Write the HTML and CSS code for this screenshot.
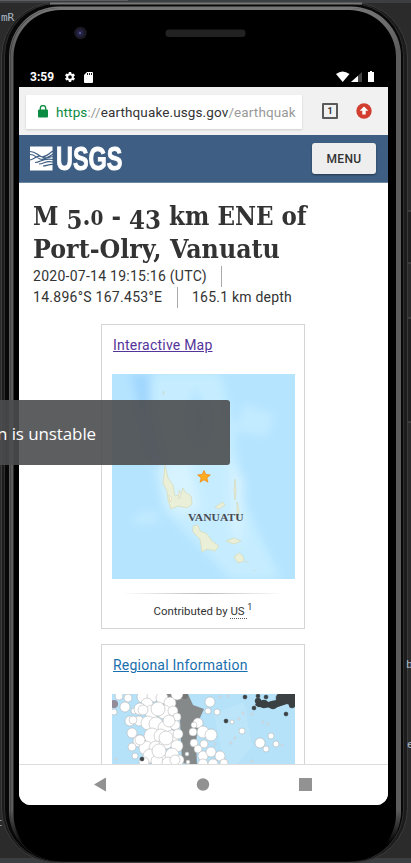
FILE: index.html
```html
<!DOCTYPE html>
<html lang="en">
<head>
<meta charset="utf-8">
<title>USGS Earthquake</title>
<link rel="stylesheet" href="styles.css">
</head>
<body>
<svg class="device" width="411" height="863" viewBox="0 0 411 863" aria-hidden="true">
  <defs>
    <linearGradient id="fade" x1="0" x2="0" y1="0" y2="1"><stop offset="0" stop-color="#777"/><stop offset=".05" stop-color="#5c5c5c"/><stop offset=".94" stop-color="#5c5c5c"/><stop offset=".98" stop-color="#000"/></linearGradient>
  </defs>
  <rect width="411" height="863" fill="#2b2b2b"/>
  <rect width="411" height="3" fill="#3c3f41"/>
  <rect x="0" y="0" width="128" height="1" fill="#5b5d5f"/>
  <rect y="858" width="411" height="5" fill="#3c3f41"/>
  <path d="M407.500 211h4v52h-4zM407.500 318h4v104h-4z" fill="#202020" stroke="#555" stroke-width="1"/>
  <rect x="1.500" y="2.500" width="406" height="860" rx="54" fill="#1c1c1c" stroke="#3c3c3c"/>
  <rect x="4.500" y="3.500" width="399" height="858" rx="52" fill="#080808" stroke="#303030"/>
  <path d="M50 3.500H362" stroke="#777" stroke-width="2"/>
  <rect x="9" y="6.500" width="392" height="855" rx="50" fill="url(#fade)"/>
  <rect x="10" y="8" width="390" height="853" rx="49" fill="#303030"/>
  <rect x="10.500" y="8" width="390" height="853" rx="49" fill="url(#fade)"/>
  <rect x="13.500" y="10" width="382.500" height="851" rx="47" fill="#000"/>
  <path d="M60 857H350" stroke="#000" stroke-width="9"/>
  <rect x="165.500" y="29.500" width="80" height="7.500" rx="3.500" fill="#222"/>
  <circle cx="80.500" cy="33" r="6.200" fill="#1b1a24"/><circle cx="80" cy="33" r="3.500" fill="#25234a"/><circle cx="80" cy="33" r="1" fill="#686993"/>
</svg>
<span class="code c1">mR</span><span class="code c2">t</span><span class="code c3">b</span><span class="code c4">e</span>
<main class="phone">
  <div class="status">
    <span class="time">3:59</span>
    <svg class="gear" width="12" height="12" viewBox="0 0 24 24"><path fill="#fff" fill-rule="evenodd" d="M19.400 13a7.500 7.500 0 0 0 0-2l2.500-2-2.400-4.100-2.900 1.200-1.800-1L14.300 2H9.700l-.5 3.100-1.800 1-2.900-1.200L2.100 9l2.500 2v2l-2.500 2 2.400 4.100 2.900-1.200 1.800 1 .5 3.100h4.600l.5-3.100 1.800-1 2.900 1.200 2.400-4.100zM12 15.700a3.700 3.700 0 1 1 0-7.400 3.700 3.700 0 0 1 0 7.400z"/></svg>
    <svg class="sd" width="9" height="11" viewBox="0 0 9 11"><path fill="#fff" d="M3 0h5a1 1 0 0 1 1 1v9a1 1 0 0 1-1 1H1a1 1 0 0 1-1-1V3z"/><path stroke="#222" d="M3.500 1v2M5.500 1v2M7.500 1v2"/></svg>
    <svg class="signals" width="40" height="12" viewBox="0 0 40 12"><path fill="#fff" d="M0 3Q6.500-2 13.500 3L6.700 11z"/><path fill="#444" d="M26 1v10H15z"/><path fill="#fff" d="M22 4.700V11h-7z"/><path fill="#fff" d="M34 0h2v1h2v10h-6V1h2z"/></svg>
  </div>
  <div class="screen">
    <div class="browser">
      <div class="url">
        <svg width="10" height="13" viewBox="0 0 10 13"><rect y="4.500" width="10" height="8" rx="1" fill="#0c8b43"/><path d="M2.300 5V3.300a2.700 2.700 0 0 1 5.400 0V5" fill="none" stroke="#0c8b43" stroke-width="1.300"/></svg>
        <span class="address"><span class="secure">https</span><span class="dim">://</span>earthquake.usgs.gov<span class="dim">/earthquak</span></span>
      </div>
      <div class="tabs">1</div>
      <svg width="16" height="16" viewBox="0 0 16 16"><circle cx="8" cy="8" r="7.700" fill="#d23f31"/><path fill="#fff" d="M8 3.500l4.300 4.300H9.700v3.700H6.300V7.800H3.700z"/></svg>
    </div>
    <header class="site">
      <div class="logo">
        <svg width="23" height="25" viewBox="0 0 23 25"><path fill="#fff" d="M0 .5h22.500v24H0z"/><g fill="none" stroke="#3e5e83" stroke-width="1.200"><path d="M0 5.500c6 0 7 3.500 11 5S18 8 23 5M0 8.500c5 0 6 3 10 4.500s8-2 13-5M0 14c5-1 7-5.500 11-3.500s6 1.500 12 0M5 16.500c6 0 7-5 18-3M9 18c5 0 7-4 14-2M13 20c4 0 6-2 10-1.500"/></g></svg>
        <span class="word">USGS</span>
      </div>
      <button class="menu">MENU</button>
    </header>
    <section class="content">
      <h1><span class="l1">M <span class="drop">5</span>.<span class="small">0</span> - <span class="drop">43</span> km ENE of</span><br><span class="l2">Port-Olry, Vanuatu</span></h1>
      <div class="meta"><span class="cell date">2020-07-14 19:15:16 (UTC)</span></div>
      <div class="meta"><span class="cell coord">14.896°S 167.453°E</span><span class="depth">165.1 km depth</span></div>
      <article class="card first">
        <a class="visited">Interactive Map</a>
        <svg class="map" width="183" height="205" viewBox="0 0 183 205">
          <defs><filter id="b"><feGaussianBlur stdDeviation="5"/></filter><filter id="s"><feGaussianBlur stdDeviation=".6"/></filter></defs>
          <rect width="183" height="205" fill="#b5e4ff"/>
          <g filter="url(#b)">
            <path fill="#c6edff" d="M42 0h66l14 55 5 60 22 50 20 40h-50L86 170 52 137 35 60z"/>
            <path fill="#a0d6fd" d="M19 0h18l2 42 11 50-9-4-12-46z"/>
            <path fill="#b0e0ff" d="M82 12l14 32-6 28-12-17z"/>
            <path fill="#c3ebff" d="M133 30l30 11-9 22-32-7zM20 143l22-7 7 12-29 2z"/>
            <path fill="#d7f3ff" d="M49 93l28-6 12 48-22 6-13-13zM118 78l14 30-3 63-9-13z"/>
          </g>
          <g filter="url(#s)" fill="#eaf0d8" stroke="#d5d9b8" stroke-width=".7">
            <path d="M53 91l3 13 5 7 2 11 6-2 2-6 2 4 6 4 1 8-5 4-9-2-7 3-3-9-1-9-4-8z"/>
            <path d="M103 133l8-5 2 3-6 4zM123 105l1 12-1 9-1-10zM125 128l2 8-1 9-1-9z"/>
            <path d="M81 152l5-1 2 6 7 3 5 7 7 5-4 5-8-2-5 3-2-13-7-7zM114 167l8-3 7 3-7 3zM122 183l5-4 4 3 1 5-6 2zM133 187l4 2M141 196l2 1M130 174l1 1"/>
            <path fill="#fff7ed" d="M57 121l3 3-2 4zM67 116l2 5-2 4z"/><path d="M51 17l1 4M53 88l1 2" stroke="#d2c9a5"/>
          </g>
          <path fill="#ffad20" stroke="#f18c16" stroke-width=".8" d="M92 96.500l1.800 4 4.500.4-3.500 3 1.200 4.300-4-2.400-4 2.400 1.200-4.300-3.500-3 4.500-.4z"/>
          <text x="76" y="147" textLength="55.500" lengthAdjust="spacingAndGlyphs" class="label">VANUATU</text>
        </svg>
        <div class="rule"></div>
        <p>Contributed by <span class="us">US </span><sup>1</sup></p>
      </article>
      <article class="card second">
        <a>Regional Information</a>
        <svg class="map" id="regional" width="183" height="100" viewBox="0 0 183 100">
          <rect width="183" height="100" fill="#b5e2f9"/>
          <path d="M102 20l30-12 8 44-25 30z" fill="#c7ebfa" opacity=".4"/>
          <path fill="#85898a" d="M53 0h23l5 11 11 4-5 11-3 22 1 23-15-2-2-43-9-10z"/>
          <circle cx="2" cy="10" r="4" fill="#938b98"/><circle cx="73" cy="2" r="3" fill="#777"/>
          <path fill="#3b4042" d="M145 8l6-2 5 2 8-2 4-6h15v13l-8-3-12 4-17-1-3-2z"/>
          <g id="quakes"></g>
        </svg>
      </article>
    </section>
    <nav>
      <svg width="369" height="40" viewBox="0 0 369 40"><g fill="#929292"><path d="M75 19.500l11-6.500q1-.5 1 .5v12q0 1-1 .5z"/><circle cx="184" cy="19.500" r="6.200"/><rect x="280" y="13" width="13" height="13" rx=".5"/></g></svg>
    </nav>
  </div>
</main>
<div class="toast">n is unstable</div>
<script src="quakes.js"></script>
</body>
</html>
```
FILE: styles.css
```css
* { box-sizing: border-box; }
body { margin: 0; width: 411px; height: 863px; overflow: hidden; position: relative; background: #2b2b2b; color: #333; font-family: Roboto, sans-serif; }
svg { display: block; flex: none; }
.device { position: absolute; inset: 0; }
.code { position: absolute; color: #a9b7c6; font: 11px "DejaVu Sans Mono", monospace; }
.c1 { left: 1px; top: 11px; }
.c2 { left: -4px; top: 816px; }
.c3 { left: 406px; top: 658px; }
.c4 { left: 407px; top: 738px; }
.phone { position: relative; width: 369px; margin-left: 19px; padding-top: 67px; }
.status { height: 20px; display: flex; align-items: center; padding-left: 11px; color: #fff; }
.time { font-size: 12px; font-weight: 700; width: 34px; }
.sd { margin-left: 8px; }
.signals { margin-left: auto; margin-right: 12px; }
.screen { height: 718px; display: flex; flex-direction: column; overflow: hidden; background: #fff; border-radius: 0 0 12px 12px; }
.browser { height: 48px; flex: none; display: flex; align-items: center; background: #f1f1f1; padding-left: 7px; }
.url { width: 276px; height: 34px; margin-top: 1px; display: flex; align-items: center; background: #fff; padding-left: 12px; gap: 8px; box-shadow: 0 1px 2px #ccc; }
.address { font-size: 13.500px; letter-spacing: .12px; white-space: nowrap; }
.secure { color: #0c8b43; }
.dim { color: #999; }
.tabs { width: 16px; height: 16px; border: 2px solid #5a5a5a; border-radius: 1px; margin: 0 18px 0 20px; font: 700 9px/12px Roboto, sans-serif; text-align: center; }
.site { height: 48px; flex: none; background: #3e5e83; border-bottom: 1px solid #6d86a1; display: flex; align-items: center; padding: 0 12px 0 11px; justify-content: space-between; }
.logo { display: flex; align-items: center; gap: 3px; }
.word { color: #fff; font: 700 33px/25px "Liberation Sans", sans-serif; width: 66px; transform: scaleX(.71); transform-origin: left; -webkit-text-stroke: 1px #fff; }
.menu { width: 64px; height: 31px; border: 0; padding: 0; border-radius: 3px; background: #eee; color: #333; box-shadow: 0 1px 2px #26384e; font: 500 12px Roboto, sans-serif; letter-spacing: .4px; }
.content { flex: 1; min-height: 0; overflow: hidden; padding: 17px 14px 0; }
h1 { margin: 0; height: 66px; font: 700 26px/33px "DejaVu Serif", serif; white-space: nowrap; }
.l1, .l2 { display: inline-block; transform-origin: left; height: 33px; vertical-align: top; }
.l1 { transform: scaleX(.885); }
.l2 { transform: scaleX(.915); }
.drop { position: relative; top: 4px; }
.small { font-size: 21px; }
.meta { display: flex; height: 21px; line-height: 21px; font-size: 14px; white-space: nowrap; }
.cell { border-right: 1px solid #aaa; margin-right: 14px; }
.date { width: 189px; letter-spacing: .26px; }
.coord { width: 145px; letter-spacing: .28px; }
.depth { letter-spacing: .22px; }
.card { width: 204px; margin-left: 68px; border: 1px solid #d5d5d5; padding: 0 10px; font-size: 14px; }
.first { height: 305px; margin-top: 16px; }
.second { height: 250px; margin-top: 15px; }
.card a { display: block; height: 49px; padding: 10px 0 0 1px; line-height: 20px; text-decoration: underline; color: #1a6fae; letter-spacing: .22px; white-space: nowrap; }
.card .visited { color: #54349a; }
.label { font: 700 10px "Liberation Serif", serif; fill: #4a4b54; }
.rule { height: 1px; margin: 14px 10px 8px; background: linear-gradient(90deg, transparent, #bbb, transparent); }
p { margin: 0; text-align: center; font-size: 11.400px; line-height: 18px; white-space: nowrap; }
.us { border-bottom: 1px dotted #555; white-space: pre; }
sup { font-size: 9px; line-height: 0; }
nav { flex: none; height: 41px; border-top: 1px solid #ddd; background: #fff; }
.toast { position: absolute; left: -10px; top: 400px; width: 240px; height: 65px; padding-left: 7px; background: rgba(75, 77, 79, .9); color: #fff; border-radius: 3px; font: 17px/67px "Open Sans", sans-serif; letter-spacing: -.1px; white-space: nowrap; }
```
FILE: quakes.js
```js
const white = [
  [7,2,4],[16,4,4],[13,13,5],[2,18,3],[22,17,3],[31,3,6],[41,2,6],[50,4,6],[58,9,6],[35,10,6],[40,18,7],[52,18,7],
  [28,15,6],[61,17,5],[18,27,5],[27,27,5],[36,29,7],[44,30,7],[53,34,7],[63,31,5],[40,42,8],[49,42,7],[60,43,7],[66,40,5],
  [20,39,5],[27,47,6],[34,54,7],[44,54,7],[54,48,7],[65,52,6],[20,53,4],[23,62,3],[38,62,7],[49,61,7],[60,61,7],[67,66,5],
  [45,67,6],[56,69,6],[32,68,5],[65,23,4],[65,0,6],[98,8,5],[96,17,3],[105,18,3],[86,29,5],[81,38,4],[91,38,6],[99,41,6],
  [82,49,4],[86,55,4],[91,62,5],[99,58,5],[108,62,5],[91,70,5],[101,70,5],[112,69,4],[82,31,3],[92,50,4],[46,15,7],[31,16,5],
  [57,27,6],[21,26,4],[28,46,5],[54,44,7],[47,57,7],[63,66,5],[130,37,3],[159,42,3],[148,49,5],[164,50,3],[154,55,3],
  [131,19,1],[140,20,1],[151,28,1],[156,30,1],[127,25,1],[119,49,1],[123,44,1],[140,67,1],[108,3,1],[116,2,1],[170,51,1],[120,28,2],[75,60,2],[76,68,2],[103,50,1],[4,65,1]
];
const dark = [[133,3,2],[142,14,2],[114,27,2],[174,20,2],[146,2,2],[152,10,4],[161,11,4],[169,4,5],[179,3,4],[180,11,3],[146,7,3],[154,3,2],[30,65,2]];
const group = document.getElementById("quakes");
function plot(points, fill, stroke) {
  for (const [x, y, r] of points) {
    const dot = document.createElementNS("http://www.w3.org/2000/svg", "circle");
    for (const [key, value] of Object.entries({ cx: x, cy: y, r, fill, stroke, "stroke-width": .5 })) dot.setAttribute(key, value);
    group.appendChild(dot);
  }
}
plot(white, "#fff", "#aaa");
plot(dark, "#3b4042", "#3b4042");
```
